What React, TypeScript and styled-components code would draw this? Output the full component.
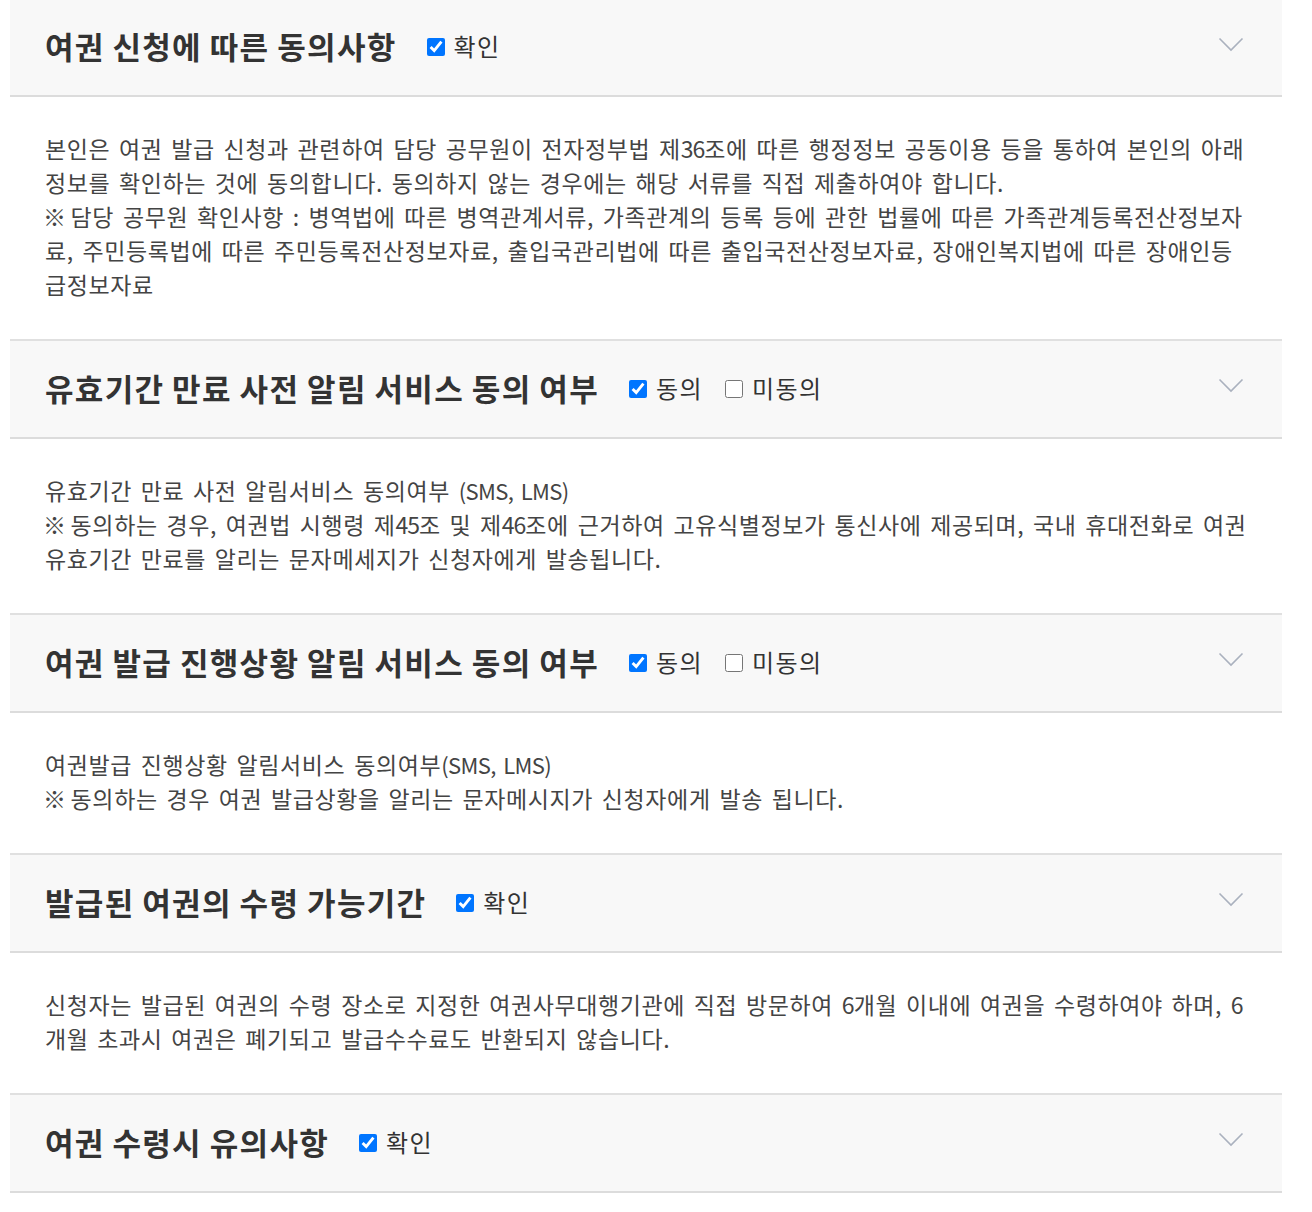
import React from 'react'
import styled, { createGlobalStyle } from 'styled-components'

const GlobalStyle = createGlobalStyle`
    body {
        margin: 0;
        background: #ffffff;
        font-family: "Noto Sans CJK KR", "Noto Sans", sans-serif;
    }
`

type Choice = { label: string; checked: boolean }
type Agreement = { title: string; choices: Choice[]; lines: string[] }

// lines are kept as they break in the original page
const agreements: Agreement[] = [
    {
        title: '여권 신청에 따른 동의사항',
        choices: [{ label: '확인', checked: true }],
        lines: [
            '본인은 여권 발급 신청과 관련하여 담당 공무원이 전자정부법 제36조에 따른 행정정보 공동이용 등을 통하여 본인의 아래',
            '정보를 확인하는 것에 동의합니다. 동의하지 않는 경우에는 해당 서류를 직접 제출하여야 합니다.',
            '※ 담당 공무원 확인사항 : 병역법에 따른 병역관계서류, 가족관계의 등록 등에 관한 법률에 따른 가족관계등록전산정보자',
            '료, 주민등록법에 따른 주민등록전산정보자료, 출입국관리법에 따른 출입국전산정보자료, 장애인복지법에 따른 장애인등',
            '급정보자료',
        ],
    },
    {
        title: '유효기간 만료 사전 알림 서비스 동의 여부',
        choices: [
            { label: '동의', checked: true },
            { label: '미동의', checked: false },
        ],
        lines: [
            '유효기간 만료 사전 알림서비스 동의여부 (SMS, LMS)',
            '※ 동의하는 경우, 여권법 시행령 제45조 및 제46조에 근거하여 고유식별정보가 통신사에 제공되며, 국내 휴대전화로 여권',
            '유효기간 만료를 알리는 문자메세지가 신청자에게 발송됩니다.',
        ],
    },
    {
        title: '여권 발급 진행상황 알림 서비스 동의 여부',
        choices: [
            { label: '동의', checked: true },
            { label: '미동의', checked: false },
        ],
        lines: [
            '여권발급 진행상황 알림서비스 동의여부(SMS, LMS)',
            '※ 동의하는 경우 여권 발급상황을 알리는 문자메시지가 신청자에게 발송 됩니다.',
        ],
    },
    {
        title: '발급된 여권의 수령 가능기간',
        choices: [{ label: '확인', checked: true }],
        lines: [
            '신청자는 발급된 여권의 수령 장소로 지정한 여권사무대행기관에 직접 방문하여 6개월 이내에 여권을 수령하여야 하며, 6',
            '개월 초과시 여권은 폐기되고 발급수수료도 반환되지 않습니다.',
        ],
    },
    {
        title: '여권 수령시 유의사항',
        choices: [{ label: '확인', checked: true }],
        lines: [],
    },
]

// the page's font sets latin letters and digits narrower than hangul
const renderLine = (line: string) => {
    const note = line.startsWith('※ ')
    const text = note ? line.slice(2) : line
    const parts = text.split(/(\(SMS, LMS\)|\d+)/).map((part, i) => {
        if (part === '(SMS, LMS)') return <Latin key={i}>{part}</Latin>
        if (/^\d+$/.test(part)) return <Num key={i}>{part}</Num>
        return part
    })
    return note ? [<Mark key="mark">※</Mark>, ...parts] : parts
}

const App = () => {
    return (
        <>
            <GlobalStyle />
            <Page>
                {agreements.map((item) => (
                    <Section key={item.title}>
                        <Header>
                            <Title>{item.title}</Title>
                            <Choices>
                                {item.choices.map((c) => (
                                    <Choice key={c.label}>
                                        <Check type="checkbox" defaultChecked={c.checked} />
                                        {c.label}
                                    </Choice>
                                ))}
                            </Choices>
                            <Chevron width="26" height="16" viewBox="0 0 26 16">
                                <polyline points="1.5,1.5 13,13 24.5,1.5" />
                            </Chevron>
                        </Header>
                        {item.lines.length > 0 && (
                            <Body>
                                {item.lines.map((line, i) => (
                                    <Line key={i}>{renderLine(line)}</Line>
                                ))}
                            </Body>
                        )}
                    </Section>
                ))}
            </Page>
        </>
    )
}

const Page = styled.div`
    width: 1272px;
    margin-left: 10px;
`

const Section = styled.section`
    &:first-child > header {
        border-top: none;
        height: 97px;
    }
`

const Header = styled.header`
    display: flex;
    align-items: center;
    box-sizing: border-box;
    height: 100px;
    padding: 0 38px 4px 35px;
    background: #f8f8f8;
    border-top: 2px solid #e0e0e0;
    border-bottom: 2px solid #dcdcdc;
`

const Title = styled.h2`
    margin: 0 30px 0 0;
    font-size: 31px;
    font-weight: 700;
    letter-spacing: 1.3px;
    word-spacing: -0.5px;
    color: #333;
`

const Choices = styled.div`
    display: flex;
    align-items: center;
    gap: 22px;
    flex: 1;
`

const Choice = styled.label`
    display: flex;
    align-items: center;
    gap: 9px;
    font-size: 24px;
    letter-spacing: 1.4px;
    color: #333;
`

const Check = styled.input`
    width: 18px;
    height: 18px;
    margin: 3px 0 0 0;
    accent-color: #0075ff;
`

const Chevron = styled.svg`
    fill: none;
    stroke: #aab1be;
    stroke-width: 1.6;
    margin-top: -2px;
`

const Body = styled.div`
    padding: 34px 20px 38px 35px;
    font-size: 23px;
    line-height: 34px;
    letter-spacing: 0.6px;
    word-spacing: 3px;
    color: #444;
`

const Line = styled.p`
    margin: 0;
    white-space: nowrap;
`

const Mark = styled.span`
    margin: 0 4px 0 -2px;
`

const Latin = styled.span`
    font-size: 22px;
    line-height: 1;
    letter-spacing: -0.6px;
`

const Num = styled.span`
    letter-spacing: -1px;
`

export default App
